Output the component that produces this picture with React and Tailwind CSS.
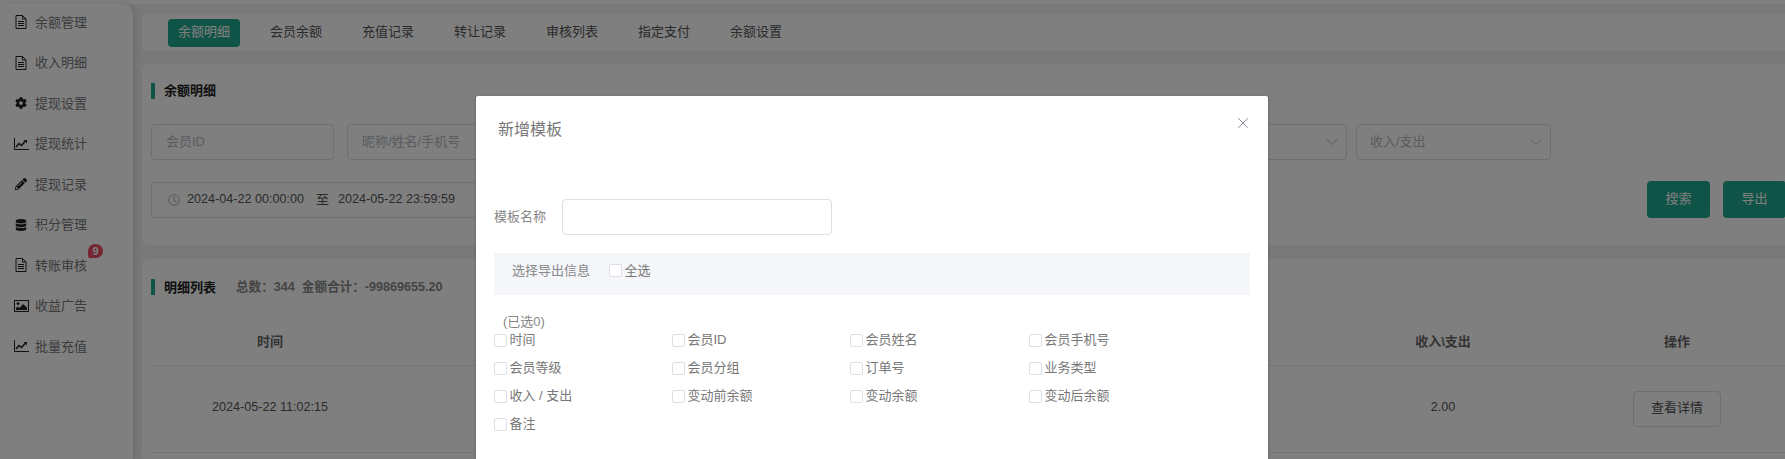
import React from "react";
import { FaCog, FaPencilAlt, FaDatabase, FaRegClock } from "react-icons/fa";
import { ChevronDown, X } from "lucide-react";

const FileIcon = () => (
  <svg width="12" height="14" viewBox="0 0 12 14" fill="none" stroke="currentColor">
    <path d="M1 .5h6.5L11 4v9.5H1z" />
    <path d="M7.5 .5V4H11M3 6.5h6M3 8.5h6M3 10.5h6" />
  </svg>
);

const ChartIcon = () => (
  <svg width="15" height="12" viewBox="0 0 15 12" fill="none" stroke="currentColor">
    <path d="M.5 0v11.5H15" />
    <path d="M2 9l3-3.5 2.5 2L11 3.5" strokeWidth="1.6" />
    <path d="M9.5 2H13v3.5z" fill="currentColor" stroke="none" />
  </svg>
);

const ImageIcon = () => (
  <svg width="15" height="12" viewBox="0 0 15 12" fill="none" stroke="currentColor">
    <rect x=".5" y=".5" width="14" height="11" />
    <circle cx="4" cy="3.6" r="1.4" fill="currentColor" stroke="none" />
    <path d="M2 10V8l2-1.5L5.5 8 9 4l4 3.5V10z" fill="currentColor" stroke="none" />
  </svg>
);

const menu = [
  { label: "余额管理", icon: <FileIcon /> },
  { label: "收入明细", icon: <FileIcon /> },
  { label: "提现设置", icon: <FaCog className="text-[12px]" /> },
  { label: "提现统计", icon: <ChartIcon /> },
  { label: "提现记录", icon: <FaPencilAlt className="text-[12px]" /> },
  { label: "积分管理", icon: <FaDatabase className="text-[12px]" /> },
  { label: "转账审核", icon: <FileIcon />, badge: 9 },
  { label: "收益广告", icon: <ImageIcon /> },
  { label: "批量充值", icon: <ChartIcon /> },
];

const tabs = ["余额明细", "会员余额", "充值记录", "转让记录", "审核列表", "指定支付", "余额设置"];

const fields = [
  "时间", "会员ID", "会员姓名", "会员手机号",
  "会员等级", "会员分组", "订单号", "业务类型",
  "收入 / 支出", "变动前余额", "变动余额", "变动后余额",
  "备注",
];

const SectionTitle = ({ children }) => (
  <div className="flex items-center h-4 border-l-4 border-[#1fa88c] pl-[9px] text-[13px] font-semibold text-[#222]">
    {children}
  </div>
);

const SelectBox = ({ label }) => (
  <div className="flex items-center justify-between w-[195px] h-9 shrink-0 border border-[#dcdfe6] rounded pl-[13px] pr-1 text-[13px] text-[#b4b8c0]">
    <span>{label}</span>
    <ChevronDown size={20} strokeWidth={1.2} className="text-[#b4b8c0]" />
  </div>
);

const Checkbox = ({ label }) => (
  <label className="flex items-center gap-[2.5px] h-7 text-[13px] text-[#777]">
    <span className="w-[13px] h-[13px] border border-[#dcdfe6] rounded-[2px] bg-white" />
    {label}
  </label>
);

export default function App() {
  return (
    <div className="relative h-screen overflow-hidden bg-[#f2f2f2] font-['Liberation_Sans','Noto_Sans_CJK_SC',sans-serif]">
      <div className="h-1 bg-white" />
      <div className="flex">
        <aside className="w-[133px] h-[455px] shrink-0 bg-white rounded-tr-[10px] shadow-[3px_0_6px_rgba(0,0,0,0.1)]">
          <nav className="-mt-[2px]">
            {menu.map((item) => (
              <div key={item.label} className="relative flex items-center h-[40.5px] text-[13px] text-[#777]">
                <span className="flex justify-center w-[42px] shrink-0 -mr-[7px] text-[#222]">
                  {item.icon}
                </span>
                {item.label}
                {item.badge && (
                  <span className="absolute left-[88px] top-[-1px] flex items-center justify-center w-[15px] h-[14px] rounded-[7px] rounded-bl-[2px] bg-[#ed4c67] text-[11px] font-bold text-white">
                    {item.badge}
                  </span>
                )}
              </div>
            ))}
          </nav>
        </aside>

        <main className="w-[1652px] shrink-0 pl-[9px] pt-[10px]">
          <div className="flex items-center gap-5 h-[37px] pl-[26px] bg-white rounded-l-[6px]">
            {tabs.map((tab, i) => (
              <div
                key={tab}
                className={`flex items-center justify-center w-[72px] h-7 rounded text-[13px] leading-[26px] pb-[2px] ${
                  i === 0 ? "bg-[#1fa88c] text-white" : "text-[#555]"
                }`}
              >
                {tab}
              </div>
            ))}
          </div>

          <section className="h-[181px] mt-[13px] px-[9px] pt-[19px] bg-white rounded-l-[6px]">
            <SectionTitle>余额明细</SectionTitle>
            <div className="flex items-center mt-[25px]">
              <div className="flex items-center w-[183px] h-9 shrink-0 border border-[#dcdfe6] rounded px-[14px] text-[13px] text-[#b4b8c0]">
                会员ID
              </div>
              <div className="flex items-center w-[184px] h-9 shrink-0 ml-[13px] border border-[#dcdfe6] rounded px-[14px] text-[13px] text-[#b4b8c0]">
                昵称/姓名/手机号
              </div>
              <div className="flex gap-[9px] ml-[9px]">
                <SelectBox label="" />
                <SelectBox label="" />
                <SelectBox label="" />
                <SelectBox label="" />
                <SelectBox label="收入/支出" />
              </div>
            </div>
            <div className="flex items-center mt-[21px]">
              <div className="flex items-center w-[400px] h-9 border border-[#dcdfe6] rounded pl-4 text-[12.6px] text-[#555]">
                <FaRegClock className="text-[12px] text-[#b4b8c0] mr-[7px] shrink-0" />
                <span>2024-04-22 00:00:00</span>
                <span className="ml-[12px] mr-[9px] text-[13px]">至</span>
                <span>2024-05-22 23:59:59</span>
              </div>
              <div className="flex gap-[13px] ml-auto mr-[-10px]">
                <button className="w-[63px] h-[37px] pb-[2px] rounded bg-[#1fa88c] text-[13px] text-white">搜索</button>
                <button className="w-[63px] h-[37px] pb-[2px] rounded bg-[#1fa88c] text-[13px] text-white">导出</button>
              </div>
            </div>
          </section>

          <section className="mt-[14px] h-[200px] pl-[9px] pt-[19px] bg-white rounded-tl-[6px]">
            <div className="flex items-center">
              <SectionTitle>明细列表</SectionTitle>
              <div className="ml-[20px] text-[12.6px] font-semibold text-[#888] whitespace-pre">总数：344  金额合计：-99869655.20</div>
            </div>
            <div className="mt-[21px] text-[13px]">
              <div className="flex items-center h-[48px] font-semibold text-[#666] border-b border-[#e9ebf2]">
                <div className="w-[238px] text-center">时间</div>
                <div className="flex-1" />
                <div className="w-[252px] text-center">收入\支出</div>
                <div className="w-[216px] text-center">操作</div>
              </div>
              <div className="flex items-center h-[87px] text-[#555] border-b border-[#e9ebf2]">
                <div className="w-[238px] pb-[3px] text-center text-[12.6px]">2024-05-22 11:02:15</div>
                <div className="flex-1" />
                <div className="w-[252px] pb-[3px] text-center text-[12.6px]">2.00</div>
                <div className="w-[216px] flex justify-center">
                  <button className="w-[88px] h-9 pb-[2px] border border-[#dcdfe6] rounded text-[#555]">查看详情</button>
                </div>
              </div>
            </div>
          </section>
        </main>
      </div>

      <div className="absolute inset-0 bg-black/50" />

      <div className="absolute left-[476px] top-[96px] w-[792px] h-[400px] bg-white rounded-[2px] shadow-[0_1px_3px_rgba(0,0,0,0.3)] px-[18px]">
        <div className="pt-[24px] pl-[4px] text-[16px] leading-5 text-[#777]">新增模板</div>
        <X size={18} strokeWidth={1.3} className="absolute right-[16px] top-[18px] text-[#8a8e96]" />
        <div className="flex items-center mt-[59px]">
          <span className="w-[68px] text-[13px] text-[#888]">模板名称</span>
          <div className="w-[270px] h-9 border border-[#dcdfe6] rounded" />
        </div>
        <div className="flex items-center h-[42px] mt-[18px] pl-[18px] pb-[7px] bg-[#f5f6fa] text-[13px]">
          <span className="w-[97px] text-[#888]">选择导出信息</span>
          <Checkbox label="全选" />
        </div>
        <div className="mt-[18px] pl-[9px] text-[13px] leading-[18px] text-[#888]">(已选0)</div>
        <div className="grid grid-cols-[178px_178px_179px_178px] -mt-[5px]">
          {fields.map((field) => (
            <Checkbox key={field} label={field} />
          ))}
        </div>
      </div>
    </div>
  );
}
